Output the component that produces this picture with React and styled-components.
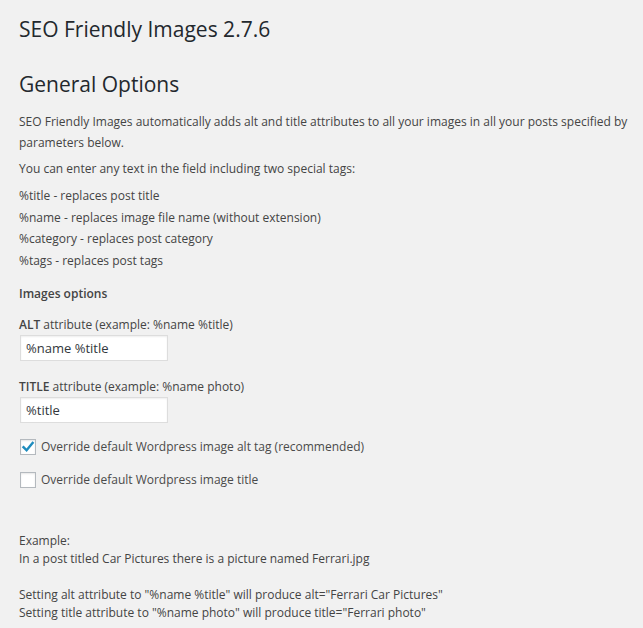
import React from 'react';
import styled, { createGlobalStyle } from 'styled-components';

const GlobalStyle = createGlobalStyle`
  html, body {
    margin: 0;
    background: #f1f1f1;
  }
  body {
    font-family: "Open Sans", "Liberation Sans", sans-serif;
    color: #444;
    font-size: 12px;
  }
`;

const Wrap = styled.div`
  padding: 15px 8px 0 19px;
  width: 643px;
  box-sizing: border-box;
`;

const Title = styled.h2`
  margin: 0;
  font-size: 21px;
  line-height: 29px;
  font-weight: 400;
  color: #23282d;
`;

const Section = styled.h3`
  margin: 26px 0 12px;
  font-size: 21px;
  line-height: 29px;
  font-weight: 400;
  color: #23282d;
`;

const Para = styled.p`
  margin: 0 0 ${p => p.$gap || 6}px;
  line-height: 21px;
`;

const TagList = styled.div`
  display: flex;
  flex-direction: column;
  line-height: 21.5px;
  margin-bottom: 12px;
`;

const Sub = styled.h4`
  margin: 0 0 10px;
  font-size: 12px;
  line-height: 21px;
  font-weight: 600;
`;

const Fields = styled.div`
  display: flex;
  flex-direction: column;
  gap: 15px;
  margin-bottom: 13px;
`;

const Field = styled.label`
  display: flex;
  flex-direction: column;
  align-items: flex-start;
  line-height: 21px;
  b { font-weight: 600; }
`;

const Input = styled.input`
  box-sizing: border-box;
  width: 148px;
  height: 26px;
  margin: 0 0 0 1px;
  padding: 2px 5px;
  border: 1px solid #ddd;
  background: #fff;
  box-shadow: inset 0 1px 2px rgba(0, 0, 0, 0.07);
  font-family: inherit;
  font-size: 13px;
  color: #32373c;
  outline: none;
`;

const Check = styled.label`
  display: flex;
  align-items: center;
  gap: 5px;
  margin: ${p => p.$top || 0}px 0 0 1px;
  line-height: 21px;
  color: #4a4a4a;
`;

const Box = styled.span`
  box-sizing: border-box;
  width: 16px;
  height: 16px;
  border: 1px solid #b4b9be;
  background: #fff;
  box-shadow: inset 0 1px 2px rgba(0, 0, 0, 0.1);
  display: flex;
  align-items: center;
  justify-content: center;
`;

const Example = styled.div`
  margin-top: 42px;
  line-height: 18px;
`;

const Spacer = styled.div`
  height: 18px;
`;

const Tick = () => (
  <svg width="14" height="14" viewBox="0 0 14 14">
    <path d="M2.5 7.2 L5.6 10.3 L11.6 3" fill="none" stroke="#1e8cbe" strokeWidth="2.4" strokeLinecap="square" />
  </svg>
);

export default function App() {
  return (
    <>
      <GlobalStyle />
      <Wrap>
        <Title>SEO Friendly Images 2.7.6</Title>
        <Section>General Options</Section>
        <Para $gap={5}>
          SEO Friendly Images automatically adds alt and title attributes to all your images in all your posts specified by parameters below.
        </Para>
        <Para $gap={6}>You can enter any text in the field including two special tags:</Para>
        <TagList>
          <span>%title - replaces post title</span>
          <span>%name - replaces image file name (without extension)</span>
          <span>%category - replaces post category</span>
          <span>%tags - replaces post tags</span>
        </TagList>
        <Sub>Images options</Sub>
        <Fields>
          <Field>
            <span><b>ALT</b> attribute (example: %name %title)</span>
            <Input defaultValue="%name %title" />
          </Field>
          <Field>
            <span><b>TITLE</b> attribute (example: %name photo)</span>
            <Input defaultValue="%title" />
          </Field>
        </Fields>
        <Check>
          <Box><Tick /></Box>
          Override default Wordpress image alt tag (recommended)
        </Check>
        <Check $top={12}>
          <Box />
          Override default Wordpress image title
        </Check>
        <Example>
          <div>Example:</div>
          <div>In a post titled Car Pictures there is a picture named Ferrari.jpg</div>
          <Spacer />
          <div>Setting alt attribute to "%name %title" will produce alt="Ferrari Car Pictures"</div>
          <div>Setting title attribute to "%name photo" will produce title="Ferrari photo"</div>
        </Example>
      </Wrap>
    </>
  );
}
